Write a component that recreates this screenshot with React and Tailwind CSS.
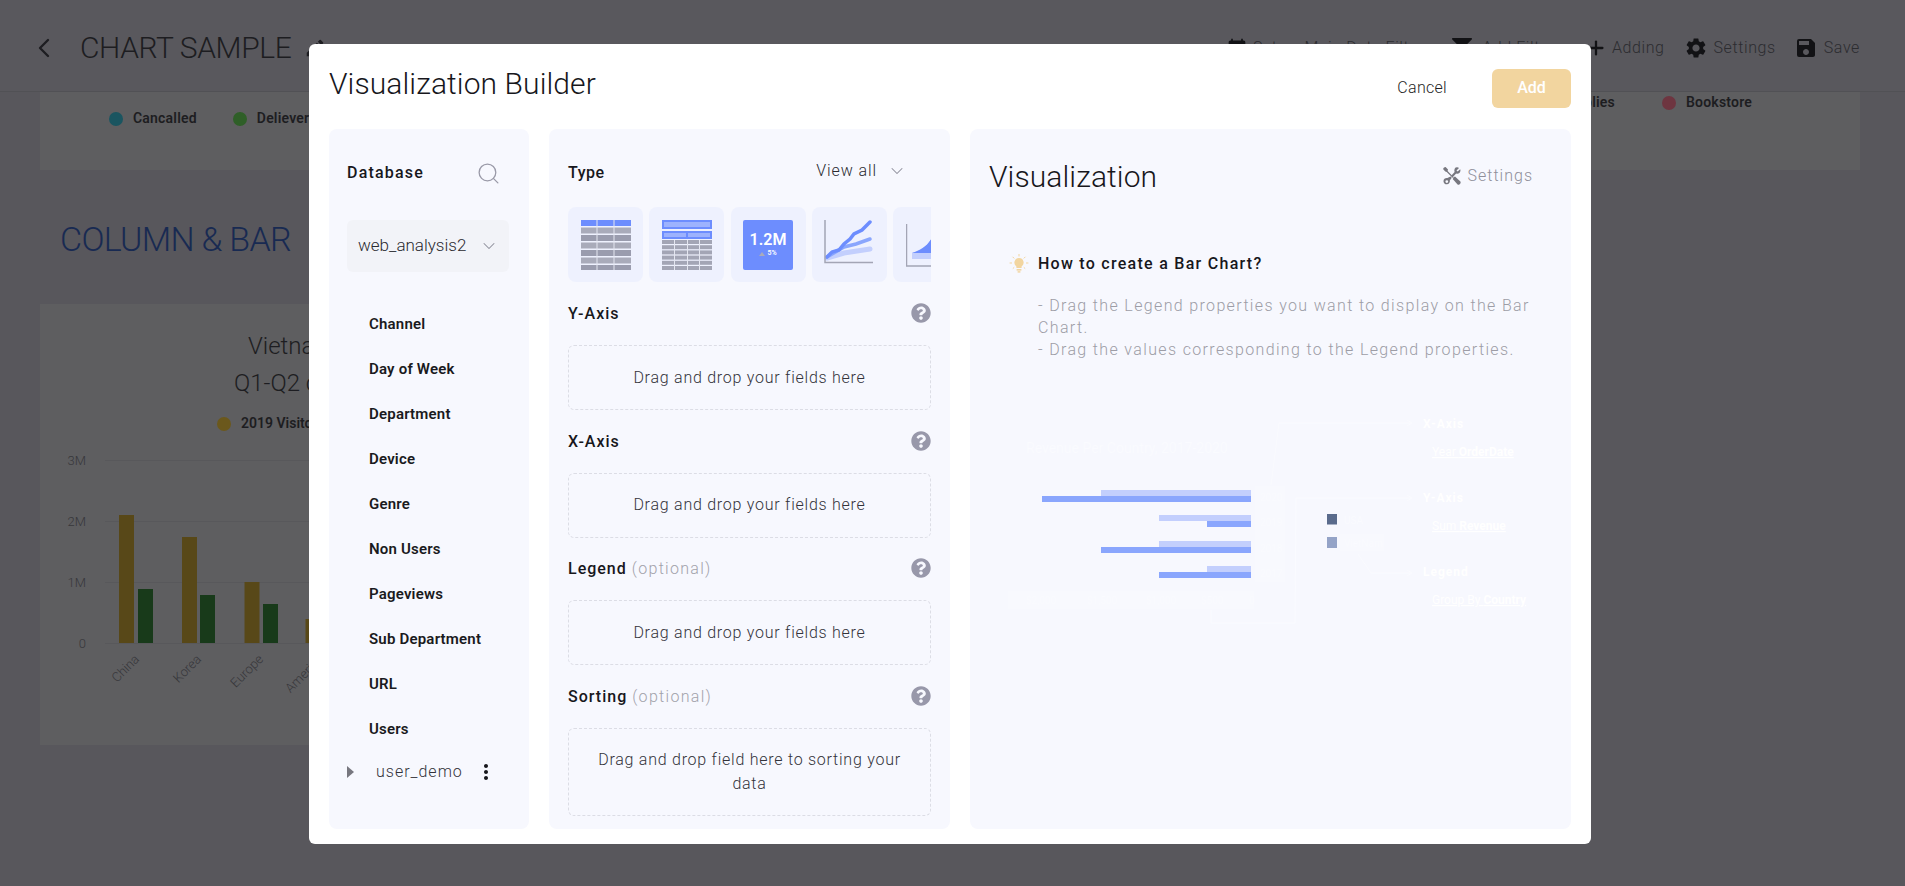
import { ChevronLeft, ChevronDown, Plus, Search } from 'lucide-react';
import { FaFilter, FaQuestionCircle } from 'react-icons/fa';
import { MdCalendarToday, MdEdit, MdMoreVert, MdSave, MdSettings } from 'react-icons/md';

const fields = ['Channel', 'Day of Week', 'Department', 'Device', 'Genre', 'Non Users', 'Pageviews', 'Sub Department', 'URL', 'Users'];

const font = "font-['Roboto',sans-serif]";

function TableThumb() {
  const rows = [0, 1, 2, 3, 4, 5];
  return (
    <svg width="50" height="50" viewBox="0 0 50 50">
      <rect width="50" height="6" fill="#6d8dfe" />
      {rows.map((r) => (
        <rect key={r} y={7.5 + r * 7.5} width="50" height="6" fill={r % 2 ? '#9a9cae' : '#a9abba'} />
      ))}
      <rect x="15.5" width="1" height="50" fill="#e4e6f0" />
      <rect x="32.5" width="1" height="50" fill="#e4e6f0" />
    </svg>
  );
}

function PivotThumb() {
  const rows = [0, 1, 2, 3, 4, 5];
  return (
    <svg width="50" height="50" viewBox="0 0 50 50">
      <rect width="50" height="9" fill="#6d8dfe" />
      <rect x="2" y="2" width="46" height="5" fill="#9db2fd" />
      <rect y="11" width="50" height="8" fill="#6d8dfe" />
      <rect x="2" y="13" width="22" height="4" fill="#9db2fd" />
      <rect x="26" y="13" width="22" height="4" fill="#9db2fd" />
      {rows.map((r) => (
        <rect key={r} y={20 + r * 5.2} width="50" height="4" fill="#a3a5b5" />
      ))}
      {[12, 25, 37].map((x) => (
        <rect key={x} x={x} y="20" width="1" height="30" fill="#e4e6f0" />
      ))}
    </svg>
  );
}

function NumberThumb() {
  return (
    <div className="flex h-[50px] w-[50px] flex-col items-center justify-center rounded-[2px] bg-[#6d8dfe] text-white">
      <span className="text-[16px] leading-[18px] font-semibold">1.2M</span>
      <span className="flex items-center gap-[2px] text-[7px] leading-[9px] font-semibold">
        <span className="h-0 w-0 border-x-[3px] border-b-[4px] border-x-transparent border-b-[#a9abba]" />
        5%
      </span>
    </div>
  );
}

function LineThumb() {
  return (
    <svg width="50" height="50" viewBox="0 0 50 50" fill="none">
      <path d="M3 38 L20 33 L46 29" stroke="#c3cffd" strokeWidth="5" strokeLinecap="round" />
      <path d="M3 37 L20 27 L32 24 L46 19" stroke="#8aa6fd" strokeWidth="3.5" strokeLinecap="round" />
      <path d="M3 37 L8 32 L15 30 L20 24 L26 19 L30 14 L38 10 L46 2" stroke="#6d8dfe" strokeWidth="3.5" strokeLinecap="round" />
      <path d="M1 0 V42.5 H49" stroke="#a3a5b5" strokeWidth="1.5" />
    </svg>
  );
}

function AreaThumb() {
  return (
    <svg width="50" height="50" viewBox="0 0 50 50" fill="none">
      <path d="M6 33 C15 32 22 26 27 16 L40 4 V39 H6 Z" fill="#8aa6fd" />
      <path d="M6 33 C15 30 22 26 27 16 V33 Z" fill="#6d8dfe" />
      <rect x="6" y="33" width="34" height="6" fill="#c3cffd" />
      <path d="M0.5 4 V46 H50" stroke="#a3a5b5" strokeWidth="1.5" />
    </svg>
  );
}

function ToolsIcon() {
  return (
    <svg width="18" height="18" viewBox="0 0 18 18" fill="#77777f">
      {/* screwdriver */}
      <path d="M1 0.5 L2.6 0 L5 2.6 L4.6 4 L10.5 9.9 L9.6 10.8 L3.7 4.9 L2.3 4.6 L0 2 Z" />
      <path d="M10.8 10.2 L12 9.6 L17.4 14.6 Q18 15.4 17.4 16.4 L16.4 17.4 Q15.4 18 14.6 17.4 L9.7 12 Z" />
      {/* wrench */}
      <path d="M12.6 0.4 Q15 -0.2 16 1 L13.5 3.4 L14.6 4.6 L17.2 2.2 Q18 4.4 16.4 6 Q15 7.2 13.2 6.6 L9.6 10.2 L8.2 8.8 L11.6 5 Q10.8 2 12.6 0.4 Z" />
      <path fillRule="evenodd" d="M7.6 9.6 L8.8 10.8 L6.8 13.4 A3.2 3.2 0 1 1 4.4 11 Z M3.8 13.2 A1.4 1.4 0 1 0 3.8 16 A1.4 1.4 0 1 0 3.8 13.2 Z" />
    </svg>
  );
}

function Tile({ children }) {
  return <div className="flex h-[75px] w-[75px] shrink-0 items-center justify-center rounded-lg bg-[#eef1fe]">{children}</div>;
}

function DropSection({ label, optional, children, tall }) {
  return (
    <div>
      <div className="flex h-6 items-center justify-between">
        <span className="pt-[2px] text-[16px] font-medium tracking-[1px] text-[#17171c]">
          {label}
          {optional && <span className="ml-[5px] font-light tracking-[1.3px] text-[#a2a2ab]">(optional)</span>}
        </span>
        <FaQuestionCircle className="text-[20px] text-[#9898aa]" />
      </div>
      <div
        className={`mt-5 flex items-center justify-center rounded-md border border-dashed border-[#dcdde5] px-6 text-center text-[16px] leading-[24px] font-light tracking-[0.75px] text-[#33333a] ${
          tall ? 'h-[88px]' : 'h-[65px]'
        }`}
      >
        {children}
      </div>
    </div>
  );
}

function BarGuide() {
  const bars = [
    { year: '2020', light: 101, dark: 42, y: 90 },
    { year: '2019', light: 159, dark: 207, y: 115 },
    { year: '2018', light: 159, dark: 101, y: 141 },
    { year: '2017', light: 207, dark: 159, y: 166 },
  ];
  const rect = '#f8f9fe';
  const faint = '#fafbff';
  return (
    <svg className="ml-[11px] mt-[39px] block" width="550" height="240" viewBox="0 0 550 240" fill="none" fontFamily="Roboto, sans-serif">
      <text x="26" y="53" fontSize="14" fill={faint}>Revenue Per Country, 2017-2020</text>
      <rect x="8" y="191" width="246" height="18" fill={rect} />
      <rect x="255" y="86" width="30" height="96" fill={rect} />
      {bars.map((b) => (
        <g key={b.year}>
          <rect x={b.light} y={b.y} width={251 - b.light} height="6" fill="#c3cffd" />
          <rect x={b.dark} y={b.y + 6} width={251 - b.dark} height="6" fill="#8aa6fd" />
          <text x="260" y={b.y + 11} fontSize="10" fill={faint}>{b.year}</text>
        </g>
      ))}
      {[['$2,000', 26], ['$1,500', 87], ['$1,000', 146], ['$500', 201], ['0', 249]].map(([t, x]) => (
        <text key={t} x={x} y="204" fontSize="10" fill={faint}>{t}</text>
      ))}
      <rect x="327" y="114" width="10" height="10.5" fill="#5a6b8c" />
      <rect x="327" y="137" width="10" height="11" fill="#94a3c7" />
      <text x="344" y="124" fontSize="10" fill={faint}>USA</text>
      <rect x="340" y="134" width="44" height="17" fill={rect} />
      <text x="344" y="147" fontSize="10" fill={faint}>VietNam</text>
      <path d="M271 85 L279 23 H412 M407 20 L412 23 L407 26" stroke={faint} />
      <path d="M211 210 V223 H295 L296 98 H412 M407 95 L412 98 L407 101" stroke={faint} />
      <path d="M358 154 L371 173 H412 M407 170 L412 173 L407 176" stroke={faint} />
      <g fontSize="12" fill="#ffffff">
        <text x="423" y="28" fontWeight="700" letterSpacing="1">X-Axis</text>
        <text x="432" y="56" textDecoration="underline">Year <tspan fontWeight="700">OrderDate</tspan></text>
        <text x="423" y="102" fontWeight="700" letterSpacing="1">Y-Axis</text>
        <text x="432" y="130" textDecoration="underline">Sum <tspan fontWeight="700">Revenue</tspan></text>
        <text x="423" y="176" fontWeight="700" letterSpacing="1">Legend</text>
        <text x="432" y="204" textDecoration="underline">Group By <tspan fontWeight="700">Country</tspan></text>
      </g>
    </svg>
  );
}

function Bulb() {
  return (
    <svg width="20" height="20" viewBox="0 0 20 20" fill="none">
      <path d="M10 4 a4.6 4.6 0 0 1 2.6 8.4 V14 H7.4 V12.4 A4.6 4.6 0 0 1 10 4 Z" fill="#f2d59f" />
      <rect x="7.6" y="15" width="4.8" height="1.6" fill="#f2d59f" />
      <rect x="8.6" y="17.2" width="2.8" height="1.4" fill="#f2d59f" />
      <path d="M10 0 V2.4 M3.6 2.8 L5.2 4.4 M16.4 2.8 L14.8 4.4 M0.6 9 H3 M17 9 H19.4 M3.8 14.6 L5.2 13.4 M16.2 14.6 L14.8 13.4" stroke="#f2d59f" strokeWidth="1" />
    </svg>
  );
}

function BackgroundChart() {
  const bars = [
    [79, 81, 98, 155],
    [142, 103, 160, 161],
    [204.5, 148, 223, 170],
    [265.5, 185, null, null],
  ];
  return (
    <svg className="absolute left-0 top-[130px]" width="700" height="320" viewBox="0 0 700 320" fontFamily="Roboto, sans-serif" fill="#37373b">
      {[['3M', 26, 31], ['2M', 87, 92], ['1M', 148, 153], ['0', 209, 214]].map(([t, y, ty]) => (
        <g key={t}>
          <text x="46" y={ty} fontSize="13" textAnchor="end" fontWeight="300">{t}</text>
          <rect x="65" y={y} width="635" height="1" fill="#58585b" />
        </g>
      ))}
      {bars.map(([gx, gy, bx, by]) => (
        <g key={gx}>
          <rect x={gx} y={gy} width="15" height={209 - gy} fill="#584818" />
          {bx && <rect x={bx} y={by} width="15" height={209 - by} fill="#183a1a" />}
        </g>
      ))}
      {[['China', 100], ['Korea', 162], ['Europe', 224], ['America', 284]].map(([t, x]) => (
        <text key={t} x={x} y="226" fontSize="13" fontWeight="300" textAnchor="end" transform={`rotate(-45 ${x} 226)`}>{t}</text>
      ))}
    </svg>
  );
}

function PageBehind() {
  return (
    <div className="h-screen overflow-hidden bg-[#58575c] text-[#1d1d21]">
      <header className="flex h-[92px] items-center border-b border-[#515155] bg-[#59585d] pl-[28px] pr-[45px] pt-[4px]">
        <ChevronLeft className="h-8 w-8" strokeWidth={1.75} />
        <h1 className="ml-[20px] text-[30px] font-light tracking-[-0.4px]">CHART SAMPLE</h1>
        <MdEdit className="ml-[13px] text-[22px]" />
        <div className="ml-auto flex items-center text-[16px] font-light tracking-[0.6px] text-[#2c2c30]">
          <MdCalendarToday className="text-[20px] text-[#121215]" />
          <span className="ml-[6px]">Set as Main Date Filter</span>
          <FaFilter className="ml-[28px] text-[20px] text-[#121215]" />
          <span className="ml-[10px] mr-[30px]">Add Filter</span>
          <Plus className="h-[22px] w-[22px] text-[#121215]" strokeWidth={2.5} />
          <span className="ml-[5px]">Adding</span>
          <MdSettings className="ml-[19.5px] text-[24px] text-[#121215]" />
          <span className="ml-[5.5px]">Settings</span>
          <MdSave className="ml-[18.5px] text-[24px] text-[#121215]" />
          <span className="ml-[5.5px]">Save</span>
        </div>
      </header>
      <main className="pl-[40px]">
        <div className="relative flex h-[78px] w-[1820px] items-start bg-[#5e5e60] pl-[69px] pt-[16px] text-[14px] font-semibold tracking-[0.2px]">
          <span className="flex items-center gap-[10px]"><i className="h-[14px] w-[14px] rounded-full bg-[#1a5560]" />Cancalled</span>
          <span className="ml-[36px] flex items-center gap-[10px]"><i className="h-[14px] w-[14px] rounded-full bg-[#2f5f28]" />Delievered</span>
          <span className="ml-auto -mt-[16px] flex items-center gap-[10px]"><i className="h-[14px] w-[14px] rounded-full bg-[#8a6e26]" />Office Supplies</span>
          <span className="ml-[47px] mr-[108px] -mt-[16px] flex items-center gap-[10px]"><i className="h-[14px] w-[14px] rounded-full bg-[#6e3540]" />Bookstore</span>
        </div>
        <h2 className="ml-[20px] mt-[47px] h-[41px] text-[34px] leading-[44px] font-light tracking-[-0.7px] text-[#182a52]">COLUMN &amp; BAR</h2>
        <div className="relative mt-[46px] h-[441px] w-[1200px] bg-[#5e5e60] pl-[208px] pt-[24px]">
          <p className="text-[24px] leading-[37px] font-light">Vietnam tourism</p>
          <p className="-ml-[14px] text-[24px] leading-[37px] font-light">Q1-Q2 comparison</p>
          <div className="-ml-[31px] mt-[11px] flex items-center gap-[10px] text-[14px] font-semibold">
            <i className="h-[14px] w-[14px] rounded-full bg-[#6b581c]" />2019 Visitors
          </div>
          <BackgroundChart />
        </div>
      </main>
    </div>
  );
}

export default function App() {
  return (
    <div className={`relative ${font}`}>
      <PageBehind />

      {/* modal */}
      <div className="absolute left-[309px] top-[44px] flex h-[800px] w-[1282px] flex-col rounded-md bg-white px-5 pb-[15px] text-[#17171c]">
        <div className="flex h-[85px] shrink-0 items-center justify-between pt-[3px]">
          <h2 className="-mt-[9px] text-[30px] font-light tracking-[0.1px] text-[#17171c]">Visualization Builder</h2>
          <div className="flex items-center">
            <button className="mr-[45px] text-[16px] font-light tracking-[0.3px] text-[#1f1f25]">Cancel</button>
            <button className="h-[39px] w-[79px] rounded-md bg-[#f2d59f] text-[16px] font-medium text-white">Add</button>
          </div>
        </div>

        <div className="flex min-h-0 flex-1 gap-5">
          {/* database panel */}
          <aside className="w-[200px] rounded-lg bg-[#f7f8fe] pl-[18px] pr-5 pt-[31px]">
            <div className="flex h-[26px] items-center justify-between pr-[8px]">
              <span className="text-[16px] font-medium tracking-[1.2px]">Database</span>
              <Search className="h-[25px] w-[25px] text-[#9a9aa8]" strokeWidth={1.25} />
            </div>
            <div className="mt-[34px] flex h-[52px] items-center justify-between rounded-md bg-[#f2f3f8] pl-[11px] pr-[10px]">
              <span className="text-[17px] font-light text-[#2a2a30]">web_analysis2</span>
              <ChevronDown className="h-5 w-5 text-[#8e8e9a]" strokeWidth={1.25} />
            </div>
            <ul className="mt-[30px]">
              {fields.map((f) => (
                <li key={f} className="flex h-[45px] items-center pl-[22px] text-[15px] font-semibold tracking-[0.2px] text-[#1a1a20]">{f}</li>
              ))}
            </ul>
            <div className="flex h-[39px] items-center">
              <span className="h-0 w-0 border-y-[6px] border-l-[7px] border-y-transparent border-l-[#77777f]" />
              <span className="ml-[22px] text-[16px] font-light tracking-[1px] text-[#33333a]">user_demo</span>
              <MdMoreVert className="ml-[11px] text-[24px] text-[#17171c]" />
            </div>
          </aside>

          {/* type and axis panel */}
          <section className="w-[401px] rounded-lg bg-[#f7f8fe] px-[19px] pt-[31px]">
            <div className="flex h-[26px] items-center justify-between pr-[24px]">
              <span className="text-[16px] font-medium tracking-[0.5px]">Type</span>
              <span className="-mt-[5px] flex items-center gap-[10px] text-[16px] font-light tracking-[0.9px] text-[#2a2a30]">
                View all
                <ChevronDown className="h-5 w-5 text-[#8e8e9a]" strokeWidth={1.25} />
              </span>
            </div>
            <div className="mt-[21px] flex gap-[6.25px] overflow-hidden">
              <Tile><TableThumb /></Tile>
              <Tile><PivotThumb /></Tile>
              <Tile><NumberThumb /></Tile>
              <Tile><LineThumb /></Tile>
              <Tile><AreaThumb /></Tile>
            </div>
            <div className="mt-[19px] flex flex-col gap-[18.5px]">
              <DropSection label="Y-Axis">Drag and drop your fields here</DropSection>
              <DropSection label="X-Axis">Drag and drop your fields here</DropSection>
              <DropSection label="Legend" optional>Drag and drop your fields here</DropSection>
              <DropSection label="Sorting" optional tall>Drag and drop field here to sorting your data</DropSection>
            </div>
          </section>

          {/* preview panel */}
          <section className="flex-1 rounded-lg bg-[#f7f8fe] pl-[19px] pt-[27px]">
            <div className="flex h-10 items-center justify-between pr-[38px]">
              <h3 className="text-[30px] font-light tracking-[0.1px]">Visualization</h3>
              <span className="flex items-center gap-[7px] text-[16px] font-light tracking-[1px] text-[#8f8f9a]">
                <ToolsIcon />
                Settings
              </span>
            </div>
            <div className="ml-5 mt-[56px] flex h-6 items-center gap-[9px]">
              <Bulb />
              <span className="text-[16px] font-medium tracking-[1.27px]">How to create a Bar Chart?</span>
            </div>
            <p className="ml-[49px] mt-[19px] w-[495px] text-[16px] leading-[22px] font-light tracking-[1.35px] text-[#9d9da6]">
              - Drag the Legend properties you want to display on the Bar Chart.
              <br />- Drag the values corresponding to the Legend properties.
            </p>
            <BarGuide />
          </section>
        </div>
      </div>
    </div>
  );
}
